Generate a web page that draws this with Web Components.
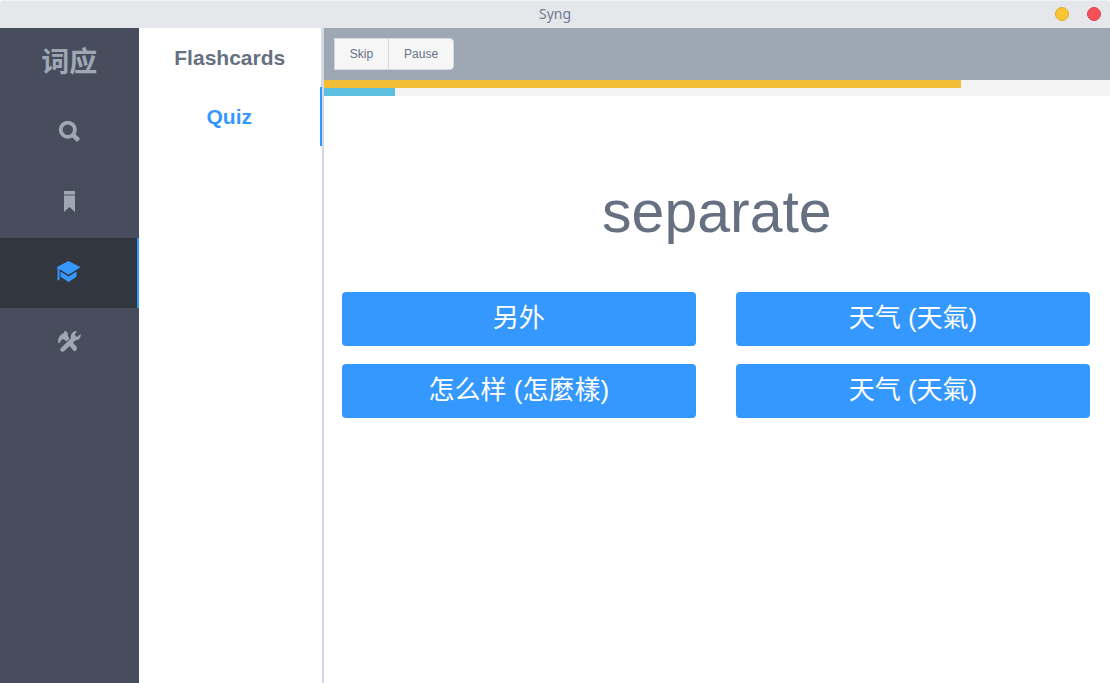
<!DOCTYPE html>
<html lang="zh-Hans">
<head>
<meta charset="utf-8">
<title>Syng</title>
<style>
  html, body { margin: 0; height: 100%; }
  body { font-family: "Liberation Sans", "Noto Sans CJK SC", sans-serif; color: #667080; background: #fff; }
</style>
</head>
<body>
<syng-window heading="Syng">
  <side-bar slot="sidebar">
    <side-link icon="search" label="Search"></side-link>
    <side-link icon="bookmark" label="Bookmarks"></side-link>
    <side-link icon="study" label="Study" active></side-link>
    <side-link icon="tools" label="Settings"></side-link>
  </side-bar>
  <mode-list slot="modes">
    <mode-link>Flashcards</mode-link>
    <mode-link active>Quiz</mode-link>
  </mode-list>
  <quiz-pane slot="content" word="separate">
    <quiz-toolbar slot="toolbar"></quiz-toolbar>
    <progress-bar slot="progress" label="Time left" value="811" style="--bar: #f3be37"></progress-bar>
    <progress-bar slot="progress" label="Questions answered" value="91" style="--bar: #5cbfde"></progress-bar>
    <answer-button>另外</answer-button>
    <answer-button>天气 (天氣)</answer-button>
    <answer-button>怎么样 (怎麼樣)</answer-button>
    <answer-button>天气 (天氣)</answer-button>
  </quiz-pane>
</syng-window>

<script>
const define = (name, render) => customElements.define(name, class extends HTMLElement {
  connectedCallback() {
    if (this.shadowRoot) return;
    this.attachShadow({ mode: "open" }).innerHTML = render(this);
  }
});

define("syng-window", el => `
  <style>
    :host { display: flex; flex-direction: column; min-height: 100%; }
    header { box-sizing: border-box; height: 28px; display: grid; grid-template-columns: 1fr auto 1fr; align-items: center;
      padding: 0 9px 1px; background: #e5e7ea; border-top: 1px solid #f0f1f3; border-radius: 3px 3px 0 0; }
    h1 { grid-column: 2; margin: 0; font: 400 14px/20px "Noto Sans", sans-serif; color: #717b91; }
    .controls { display: flex; gap: 18px; justify-content: flex-end; }
    .controls button { box-sizing: border-box; width: 14px; height: 14px; padding: 0; border-radius: 50%; border: 1px solid; }
    .controls .min { background: #fbc536; border-color: #dfaa25; }
    .controls .close { background: #f55058; border-color: #d8434c; }
    main { flex: 1; display: grid; grid-template-columns: 3fr 4fr 17fr; }
  </style>
  <header>
    <h1>${el.getAttribute("heading")}</h1>
    <div class="controls">
      <button class="min" aria-label="Minimize"></button>
      <button class="close" aria-label="Close"></button>
    </div>
  </header>
  <main><slot name="sidebar"></slot><slot name="modes"></slot><slot name="content"></slot></main>`);

define("side-bar", () => `
  <style>
    :host { display: block; min-width: 0; background: #474d5c; }
    .logo { height: 70px; line-height: 64px; text-align: center; font-size: 28px; font-weight: 700;
      font-family: "Noto Sans CJK SC", sans-serif; color: #9ea8b5; }
    nav { display: flex; flex-direction: column; }
  </style>
  <div class="logo">词应</div>
  <nav><slot></slot></nav>`);

const icons = {
  search: `<circle cx="10.800" cy="8.700" r="7.100" fill="none" stroke="currentColor" stroke-width="3.800"/>
    <path d="M15.600 13.600 L21.600 19.400" fill="none" stroke="currentColor" stroke-width="4.600"/>`,
  bookmark: `<path d="M7 0h11v3.4H7z"/><path d="M7 3.4h11v1.6H7z" opacity=".5"/><path d="M7 5h11v16l-5.500-5L7 21z"/>`,
  study: `<path d="M12.500 0 24.500 6.300 12.500 13.700 3.500 8.300V19.200H1.500V7L.500 6.300z"/>
    <path d="M4.500 10.600 12.500 15.400 20.500 10.600V15.800L12.500 21 4.500 15.800z"/>`,
  tools: `<path d="M1.200 12C.6 7.500 2.600 3.600 6.800 2.300L7.400.1 9.800.8 11 3 10.700 4.800 12.600 7.400 9.400 10.600 7.200 8.400C5.400 7.800 4.200 8.600 3.700 10L3 11.400z"/>
    <path d="M20 0 17.900 3.200 18.500 5.200 20.600 5.700 23.600 2.800C24.200 6.600 21.800 9.600 18.200 9.400L7 20.200C5.200 21.800 2.400 19.600 3.500 17.400L14 7.200C12.900 3.400 16.200-.4 20 0z"/>
    <path d="M11.400 13.400 14.800 10.200 19.800 16C20.800 17.800 18.800 20.800 16.800 20z"/>`
};

define("side-link", el => `
  <style>
    :host { display: block; }
    a { box-sizing: border-box; height: 70px; display: flex; justify-content: center; align-items: center; color: #9ea8b5; }
    :host([active]) a { color: #3498fe; background: #32363f; border-right: 2px solid #3498fe; }
    svg { display: block; width: 24px; height: 24px; fill: currentColor; overflow: visible; }
  </style>
  <a href="#${el.getAttribute("icon")}" aria-label="${el.getAttribute("label")}">
    <svg viewBox="0 0 24 24" aria-hidden="true">${icons[el.getAttribute("icon")]}</svg>
  </a>`);

define("mode-list", () => `
  <style>
    :host { display: block; min-width: 0; box-sizing: border-box; border-right: 2px solid #d3d9e4; background: #fff; }
    nav { display: flex; flex-direction: column; }
  </style>
  <nav><slot></slot></nav>`);

define("mode-link", () => `
  <style>
    :host { display: block; }
    a { box-sizing: border-box; height: 59px; display: flex; align-items: center; justify-content: center;
      font-size: 21px; line-height: 24px; font-weight: 700; color: #667080; text-decoration: none; border-right: 1px solid #d8dadd; }
    :host([active]) a { color: #3498fe; border-right: 2px solid #3498fe; }
  </style>
  <a href="#mode"><slot></slot></a>`);

define("quiz-pane", el => `
  <style>
    :host { display: flex; flex-direction: column; min-width: 0; background: #fff; }
    h2 { margin: 82px 0 46px; text-align: center; font-size: 59px; line-height: 68px; font-weight: 400; color: #667080; }
    .answers { display: grid; grid-template-columns: 1fr 1fr; gap: 18px 40px; padding: 0 20px 0 18px; }
  </style>
  <slot name="toolbar"></slot>
  <slot name="progress"></slot>
  <h2>${el.getAttribute("word")}</h2>
  <div class="answers"><slot></slot></div>`);

define("quiz-toolbar", () => `
  <style>
    :host { display: flex; padding: 10px; background: #9ea8b4; }
    button { box-sizing: border-box; height: 32px; padding: 0 15px; font: 12px/16px "Liberation Sans", sans-serif;
      color: #667080; background: #f6f6f7; border: 1px solid #d3d9e4; }
    button:first-child { border-right: 0; border-radius: 4px 0 0 4px; }
    button:last-child { margin-left: -1px; border-radius: 0 4px 4px 0; }
  </style>
  <button type="button">Skip</button><button type="button">Pause</button>`);

define("progress-bar", el => `
  <style>
    :host { display: block; height: 8px; }
    progress { display: block; width: 100%; height: 8px; appearance: none; border: 0; background: #f3f3f3; }
    progress::-webkit-progress-bar { background: #f3f3f3; }
    progress::-webkit-progress-value { background: var(--bar); }
    progress::-moz-progress-bar { background: var(--bar); }
  </style>
  <progress max="1000" value="${el.getAttribute("value")}" aria-label="${el.getAttribute("label")}"></progress>`);

define("answer-button", () => `
  <style>
    :host { display: block; min-width: 0; }
    button { display: block; box-sizing: border-box; width: 100%; height: 54px; padding: 0 0 2px; border: 0; border-radius: 4px;
      background: #3498fe; color: #fff; font: 400 26px/38px "Liberation Sans", "Noto Sans CJK SC", sans-serif; }
  </style>
  <button type="button"><slot></slot></button>`);
</script>
</body>
</html>
